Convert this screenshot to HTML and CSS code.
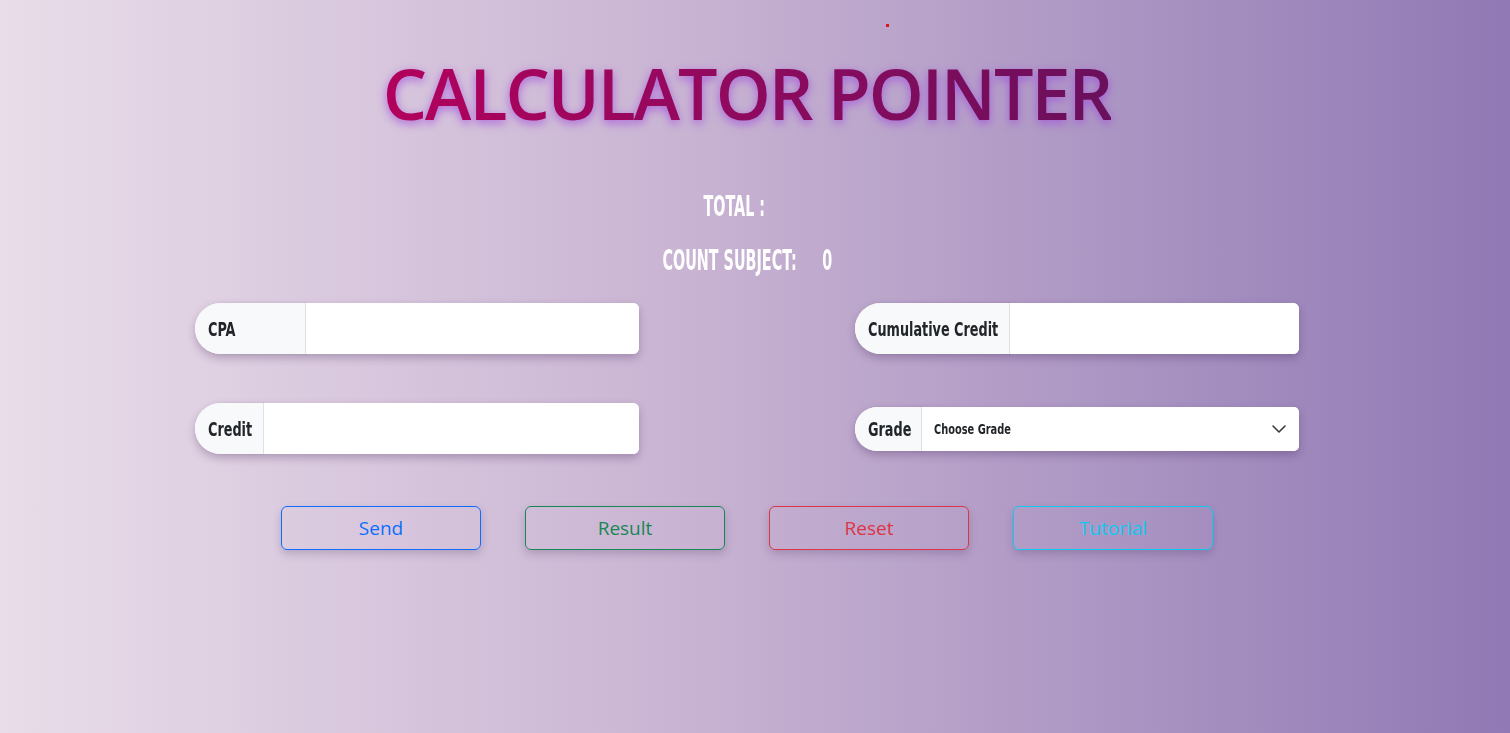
FILE: index.html
```html
<!DOCTYPE html>
<html lang="en">
<head>
<meta charset="utf-8">
<title>Calculator Pointer</title>
<link rel="stylesheet" href="styles.css">
</head>
<body>
<span class="dot"></span>
<main class="page">
  <h1 class="title">CALCULATOR POINTER</h1>
  <section class="stats">
    <p class="stat">TOTAL :<span class="stat-value"></span></p>
    <p class="stat">COUNT SUBJECT:<span class="stat-value">0</span></p>
  </section>
  <section class="form-grid">
    <div class="group">
      <span class="group-label w-cpa"><span class="squeeze">CPA</span></span>
      <input class="group-input" type="text">
    </div>
    <div class="group">
      <span class="group-label w-cum"><span class="squeeze">Cumulative Credit</span></span>
      <input class="group-input" type="text">
    </div>
    <div class="group">
      <span class="group-label w-credit"><span class="squeeze">Credit</span></span>
      <input class="group-input" type="text">
    </div>
    <div class="group group-select">
      <span class="group-label w-grade"><span class="squeeze">Grade</span></span>
      <div class="select">
        <span class="select-text">Choose Grade</span>
        <svg class="chevron" width="16" height="16" viewBox="0 0 16 16"><path d="M2 5l6 6 6-6" fill="none" stroke="#343a40" stroke-width="1.6" stroke-linecap="round" stroke-linejoin="round"/></svg>
      </div>
    </div>
  </section>
  <section class="actions">
    <button class="btn btn-blue">Send</button>
    <button class="btn btn-green">Result</button>
    <button class="btn btn-red">Reset</button>
    <button class="btn btn-cyan">Tutorial</button>
  </section>
</main>
</body>
</html>
```

FILE: styles.css
```css
* { box-sizing: border-box; }
html, body { height: 100%; }
body {
  margin: 0;
  background: linear-gradient(90deg, #e9dde9 0%, #c9b4d3 45%, #9079b4 100%);
  font-family: "Open Sans", sans-serif;
  overflow: hidden;
  position: relative;
}
.dot {
  position: absolute;
  left: 886px;
  top: 24px;
  width: 3px;
  height: 3px;
  background: #e0141e;
}
.page {
  padding-right: 16px;
  display: flex;
  flex-direction: column;
  align-items: center;
}
.title {
  margin: 48px 0 0;
  font-family: "Open Sans", sans-serif;
  font-weight: 600;
  font-size: 70px;
  line-height: 90px;
  letter-spacing: -2px;
  background: linear-gradient(90deg, #b2005c 0%, #8e0a5e 50%, #6a105c 100%);
  -webkit-background-clip: text;
  background-clip: text;
  color: transparent;
  filter: drop-shadow(0 3px 5px rgba(160, 70, 220, 0.75));
}
.stats {
  margin-top: 51px;
  display: flex;
  flex-direction: column;
  align-items: center;
  gap: 20px;
}
.stat {
  margin: 0;
  font-family: "DejaVu Sans Condensed", "DejaVu Sans", sans-serif;
  font-stretch: condensed;
  font-weight: 700;
  font-size: 29px;
  line-height: 34px;
  color: #ffffff;
  transform: scaleX(0.55);
}
.stat-value {
  display: inline-block;
  margin-left: 46px;
}
.form-grid {
  margin-top: 26px;
  display: grid;
  grid-template-columns: 444px 444px;
  column-gap: 216px;
  row-gap: 49px;
  align-items: center;
}
.group {
  display: flex;
  height: 51px;
  border-radius: 26px 6px 6px 26px;
  box-shadow: 0 4px 8px rgba(60, 30, 80, 0.28);
  background: #fff;
}
.group-select { height: 44px; }
.group-label {
  display: flex;
  align-items: center;
  flex: none;
  padding: 0 0 0 13px;
  background: #f8f9fa;
  border-radius: 26px 0 0 26px;
  border-right: 1px solid #dee2e6;
  box-shadow: 2px 0 3px rgba(0,0,0,0.08);
  white-space: nowrap;
  overflow: hidden;
}
.w-cpa { width: 111px; }
.w-cum { width: 155px; }
.w-credit { width: 69px; }
.w-grade { width: 67px; }
.squeeze {
  display: inline-block;
  font-family: "DejaVu Sans Condensed", "DejaVu Sans", sans-serif;
  font-stretch: condensed;
  font-weight: 700;
  font-size: 19px;
  color: #212529;
  transform: scaleX(0.75);
  transform-origin: left center;
}
.group-input {
  flex: 1;
  min-width: 0;
  border: 0;
  border-radius: 0 6px 6px 0;
  background: #fff;
  outline: none;
}
.select {
  flex: 1;
  display: flex;
  align-items: center;
  justify-content: space-between;
  padding: 0 12px 0 12px;
  border-radius: 0 6px 6px 0;
  background: #fff;
}
.select-text {
  display: inline-block;
  font-family: "DejaVu Sans Condensed", "DejaVu Sans", sans-serif;
  font-stretch: condensed;
  font-weight: 700;
  font-size: 14px;
  color: #212529;
  transform: scaleX(0.78);
  transform-origin: left center;
}
.actions {
  margin-top: 52px;
  display: flex;
  gap: 44px;
}
.btn {
  width: 200px;
  height: 44px;
  background: transparent;
  border: 1px solid;
  border-radius: 6px;
  font-family: "Open Sans", sans-serif;
  font-size: 19px;
  box-shadow: 0 4px 8px rgba(60, 30, 80, 0.22);
  cursor: pointer;
}
.btn-blue { color: #0d6efd; border-color: #0d6efd; }
.btn-green { color: #198754; border-color: #198754; }
.btn-red { color: #dc3545; border-color: #dc3545; }
.btn-cyan { color: #0dcaf0; border-color: #0dcaf0; }
```
